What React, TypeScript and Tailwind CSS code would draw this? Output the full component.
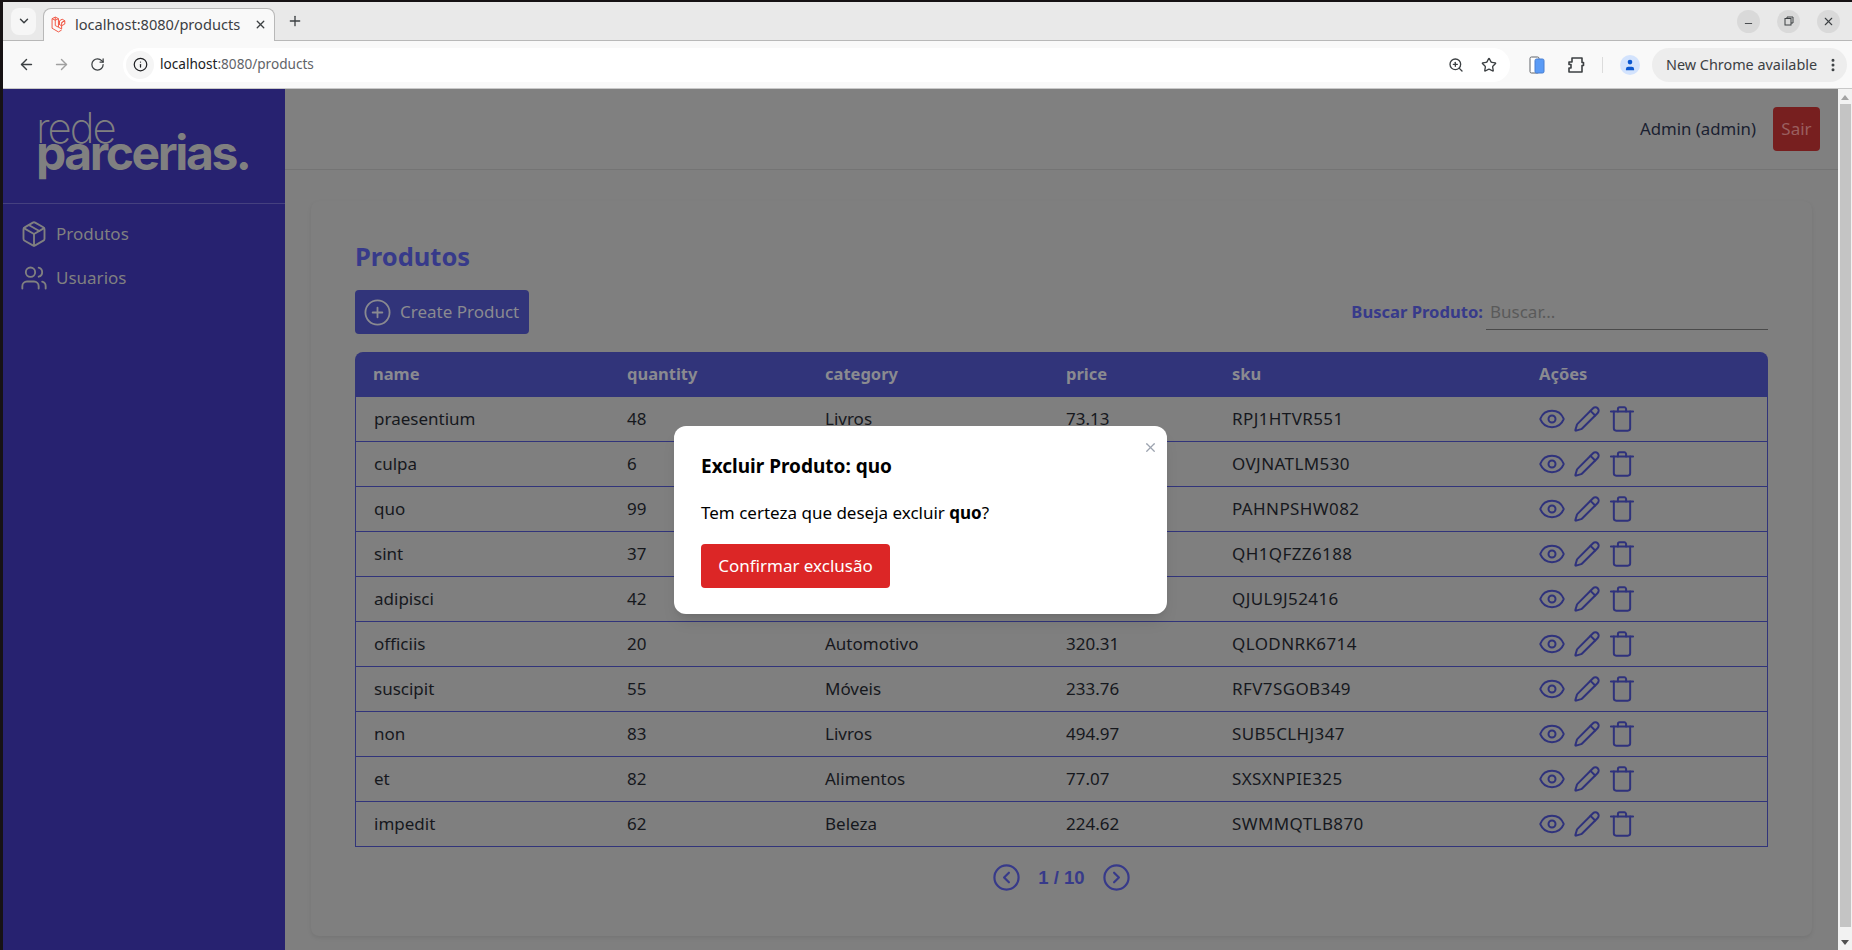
import React from "react";
import { ArrowLeft, ArrowRight, RotateCw, Info, ZoomIn, Star, Package, Users, CirclePlus, Eye, Pencil, CircleChevronLeft, CircleChevronRight, X, Plus, ChevronDown, Minus, EllipsisVertical, User } from "lucide-react";

const rows = [
  ["praesentium", "48", "Livros", "73.13", "RPJ1HTVR551"],
  ["culpa", "6", "", "", "OVJNATLM530"],
  ["quo", "99", "", "", "PAHNPSHW082"],
  ["sint", "37", "", "", "QH1QFZZ6188"],
  ["adipisci", "42", "", "", "QJUL9J52416"],
  ["officiis", "20", "Automotivo", "320.31", "QLODNRK6714"],
  ["suscipit", "55", "Móveis", "233.76", "RFV7SGOB349"],
  ["non", "83", "Livros", "494.97", "SUB5CLHJ347"],
  ["et", "82", "Alimentos", "77.07", "SXSXNPIE325"],
  ["impedit", "62", "Beleza", "224.62", "SWMMQTLB870"],
];

function Trash() {
  return (
    <svg width="28" height="28" viewBox="0 0 24 24" fill="none" stroke="currentColor" strokeWidth="1.7" strokeLinecap="round" strokeLinejoin="round">
      <path d="M2.5 5.5h19" />
      <path d="M5 5.5V20a2 2 0 0 0 2 2h10a2 2 0 0 0 2-2V5.5" />
      <path d="M8.5 5.5V3.5a1.5 1.5 0 0 1 1.5-1.5h4a1.5 1.5 0 0 1 1.5 1.5v2" />
    </svg>
  );
}

function Laravel() {
  return (
    <svg width="17" height="17" viewBox="0 0 16 16" fill="none" stroke="#f05340" strokeWidth="0.9" strokeLinejoin="round">
      <path d="M1 2.5l3-1.5 3 1.5v8l3 1.7v-3l3-1.7V4.5l-3 1.7v3L7 7.5M1 2.5v9l6 3.5 3-1.8M4 1v8l3 1.5M1 2.5l3 1.5 3-1.5M10 6.2L13 4.5 10.5 3 8 4.5v3" />
    </svg>
  );
}

function ChromeBar() {
  return (
    <header className="shrink-0 text-[#3c4043]">
      <div className="flex h-[39px] items-center border-b border-[#b8b8b8] bg-[#e9e9e9] pl-[8px] pr-[12px]">
        <div className="flex h-[27px] w-[25px] items-center justify-center rounded-lg bg-[#f6f6f6]">
          <ChevronDown size={14} strokeWidth={2.5} />
        </div>
        <div className="ml-[7px] flex h-[33px] w-[232px] translate-y-[3px] items-center gap-[7px] rounded-t-lg border border-b-0 border-[#b8b8b8] bg-[#f9f9f9] px-[7px]">
          <Laravel />
          <span className="flex-1 text-[14.6px] text-[#3c4043]">localhost:8080/products</span>
          <X size={13} strokeWidth={2.5} />
        </div>
        <Plus size={16} strokeWidth={2} className="ml-[12px]" />
        <div className="ml-auto flex items-center gap-[17px]">
          <div className="flex size-[23px] items-center justify-center rounded-full bg-[#d9d9d9]"><Minus size={11} strokeWidth={2} className="translate-y-[2px]" /></div>
          <div className="flex size-[23px] items-center justify-center rounded-full bg-[#d9d9d9]">
            <svg width="10" height="10" viewBox="0 0 10 10" fill="none" stroke="currentColor" strokeWidth="1"><rect x="1" y="2.5" width="6" height="6.5" /><path d="M3 2.5V1h6v6H7" /></svg>
          </div>
          <div className="flex size-[23px] items-center justify-center rounded-full bg-[#d9d9d9]"><X size={13} strokeWidth={2} /></div>
        </div>
      </div>
      <div className="flex h-[48px] items-center border-b border-[#c8c8c8] bg-[#f9f9f9] pl-[15px] pr-[5px]">
        <ArrowLeft size={17} strokeWidth={2} />
        <ArrowRight size={17} strokeWidth={2} className="ml-[18px] text-[#a0a0a0]" />
        <RotateCw size={15} strokeWidth={2} className="ml-[20px]" />
        <div className="ml-[18px] flex h-[34px] flex-1 items-center rounded-full bg-white pl-[3px] pr-[13px]">
          <div className="flex size-[28px] items-center justify-center rounded-full bg-[#f5f5f5]">
            <Info size={15} strokeWidth={2} className="text-[#202124]" />
          </div>
          <span className="ml-[6px] text-[13.6px] text-[#202124]">localhost<span className="text-[#5f6368]">:8080/products</span></span>
          <ZoomIn size={16} strokeWidth={2} className="ml-auto" />
          <Star size={16} strokeWidth={2} className="ml-[17px]" />
        </div>
        <svg className="ml-[19px]" width="16" height="18" viewBox="0 0 16 18">
          <rect x="1" y="1" width="9" height="16" rx="1.5" fill="#fff" stroke="#5f6368" />
          <rect x="6" y="3" width="9" height="14" rx="1.5" fill="#5a9bf6" stroke="#4a7fd0" />
        </svg>
        <svg className="ml-[22px]" width="18" height="18" viewBox="0 0 18 18" fill="none" stroke="#3c4043" strokeWidth="1.6" strokeLinejoin="round">
          <path d="M2 6h3V2h10v4.5h1.5v3H15V16H2v-4h2V8.5H2z" />
        </svg>
        <div className="ml-[17px] h-[16px] w-px bg-[#dcdcdc]" />
        <div className="ml-[17px] flex size-[20px] items-center justify-center rounded-full bg-[#d3e3fd]">
          <User size={14} strokeWidth={0} fill="#0b57d0" />
        </div>
        <div className="ml-[12px] flex h-[34px] w-[195px] items-center rounded-full bg-[#ededed] pl-[14px] pr-[6px]">
          <span className="text-[14.4px] text-[#3c4043]">New Chrome available</span>
          <EllipsisVertical size={16} strokeWidth={2.5} className="ml-auto" />
        </div>
      </div>
    </header>
  );
}

export default function App() {
  return (
    <div className="flex h-[950px] w-full flex-col overflow-hidden bg-[#161214] pl-[3px] pt-[2px]" style={{ fontFamily: '"Noto Sans", sans-serif' }}>
      <ChromeBar />
      <div className="relative flex min-h-0 flex-1">
        <aside className="w-[282px] shrink-0 bg-[#272270]">
          <div className="h-[115px] border-b border-[#45417f] pl-[33px] pt-[27px] text-[#808080]" style={{ fontFamily: "Inter, sans-serif" }}>
            <div className="text-[42px] font-extralight leading-[24px] tracking-[-0.05em]">rede</div>
            <div className="text-[48px] font-bold leading-[25px] tracking-[-0.05em]">parcerias.</div>
          </div>
          <nav className="flex flex-col gap-[20px] pl-[17px] pt-[18px] text-[#808080]">
            <div className="flex h-[24px] items-center gap-[8px] text-[17px]"><Package size={28} strokeWidth={1.6} />Produtos</div>
            <div className="flex h-[24px] items-center gap-[8px] text-[17px]"><Users size={28} strokeWidth={1.6} />Usuarios</div>
          </nav>
        </aside>
        <main className="flex min-w-0 flex-1 flex-col bg-[#7f7f7f]">
          <div className="flex h-[81px] shrink-0 items-center justify-end border-b border-[#747474] bg-[#808080]">
            <span className="text-[16.8px] text-[#1a2030]">Admin (admin)</span>
            <div className="ml-[17px] mr-[18px] flex h-[44px] w-[47px] items-center justify-center rounded bg-[#771f1f] text-[17px] text-[#9a5f5f]">Sair</div>
          </div>
          <div className="flex-1 px-[26px] pt-[31px]">
            <section className="h-[735px] rounded-lg bg-[#7f7f7f] px-[44px] pt-[39px] shadow-[0_2px_4px_rgba(0,0,0,0.08)]">
              <h1 className="text-[25.5px] font-bold leading-[32px] text-[#373a8a]">Produtos</h1>
              <div className="mt-[18px] flex items-center justify-between">
                <div className="flex h-[44px] w-[174px] items-center gap-[8px] rounded bg-[#31347a] pl-[8px] text-[17px] text-[#8a8a90]">
                  <CirclePlus size={29} strokeWidth={1.5} />Create Product
                </div>
                <div className="flex items-center">
                  <span className="text-[16.6px] font-bold text-[#373a8a]">Buscar Produto:</span>
                  <div className="ml-[3px] h-[36px] w-[282px] border-b border-[#4a4a4a] pl-[4px] text-[17px] leading-[36px] text-[#5a5a5a]">Buscar...</div>
                </div>
              </div>
              <table className="mt-[18px] w-full table-fixed border-separate border-spacing-0 text-left text-[17px] text-[#16181d]">
                <colgroup>
                  <col className="w-[254px]" />
                  <col className="w-[198px]" />
                  <col className="w-[241px]" />
                  <col className="w-[166px]" />
                  <col className="w-[307px]" />
                  <col />
                </colgroup>
                <thead>
                  <tr className="h-[45px] text-[16.5px] text-[#8a8a90]">
                    {["name", "quantity", "category", "price", "sku", "Ações"].map((h, i) => (
                      <th key={h} className={`bg-[#31347a] px-[18px] font-bold ${i === 0 ? "rounded-tl-lg" : ""} ${i === 5 ? "rounded-tr-lg" : ""}`}>{h}</th>
                    ))}
                  </tr>
                </thead>
                <tbody>
                  {rows.map((r) => (
                    <tr key={r[0]} className="h-[45px]">
                      {r.map((c, i) => (
                        <td key={i} className={`border-b border-[#31347a] px-[18px] ${i === 0 ? "border-l" : ""} ${i === 4 ? "tracking-[0.4px]" : ""}`}>{c}</td>
                      ))}
                      <td className="border-b border-r border-[#31347a] pl-[17px] pr-0">
                        <div className="flex items-center gap-[7px] text-[#2f327c]">
                          <Eye size={28} strokeWidth={1.7} />
                          <Pencil size={28} strokeWidth={1.7} />
                          <Trash />
                        </div>
                      </td>
                    </tr>
                  ))}
                </tbody>
              </table>
              <div className="mt-[16px] flex items-center justify-center gap-[17px] text-[#373a8a]">
                <CircleChevronLeft size={29} strokeWidth={1.8} />
                <span className="text-[18.5px] font-bold" style={{ fontFamily: '"Liberation Sans", sans-serif' }}>1 / 10</span>
                <CircleChevronRight size={29} strokeWidth={1.8} />
              </div>
            </section>
          </div>
        </main>
        <div className="flex w-[14px] shrink-0 flex-col items-center bg-[#f2f2f2] pt-[6px]">
          <div className="h-0 w-0 border-x-[4px] border-b-[5px] border-x-transparent border-b-[#a3a3a3]" />
          <div className="mt-[4px] h-[823px] w-[11px] bg-[#c4c4c4]" />
          <div className="mt-[13px] h-0 w-0 border-x-[4px] border-t-[5px] border-x-transparent border-t-[#505050]" />
        </div>
        <div className="absolute left-[671px] top-[337px] w-[493px] rounded-xl bg-white px-[27px] pb-[26px] pt-[26px] shadow-lg">
          <X size={15} strokeWidth={2} className="absolute right-[9px] top-[14px] text-[#9ca3af]" />
          <h2 className="text-[19px] font-bold leading-[28px] text-black">Excluir Produto: quo</h2>
          <p className="mt-[21px] text-[17px] leading-[24px] text-black">Tem certeza que deseja excluir <b>quo</b>?</p>
          <div className="mt-[19px] flex h-[44px] w-[189px] items-center justify-center rounded bg-[#dc2626] text-[17px] text-white">Confirmar exclusão</div>
        </div>
      </div>
    </div>
  );
}
